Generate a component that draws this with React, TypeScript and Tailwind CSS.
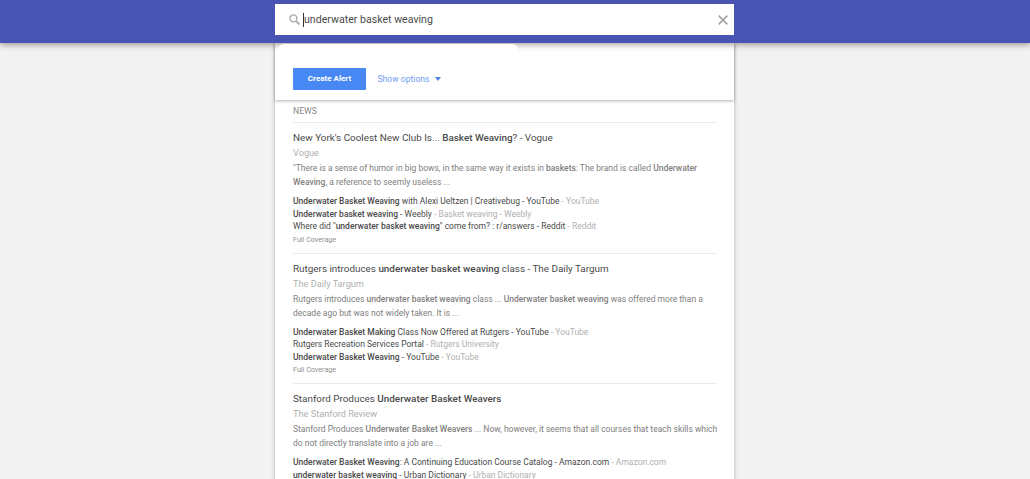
import { ReactNode } from "react";

type Story = {
  title: ReactNode;
  source: string;
  snippet: ReactNode;
  links: { text: ReactNode; site: string }[];
  coverage?: boolean;
};

const stories: Story[] = [
  {
    title: (
      <>
        New York's Coolest New Club Is... <b className="font-medium">Basket Weaving</b>? - Vogue
      </>
    ),
    source: "Vogue",
    snippet: (
      <>
        "There is a sense of humor in big bows, in the same way it exists in <b className="font-medium">baskets</b>: The
        brand is called <b className="font-medium">Underwater Weaving</b>, a reference to seemly useless ...
      </>
    ),
    links: [
      {
        text: (
          <>
            <b className="font-medium">Underwater Basket Weaving</b> with Alexi Ueltzen | Creativebug - YouTube
          </>
        ),
        site: "YouTube",
      },
      {
        text: (
          <>
            <b className="font-medium">Underwater basket weaving</b> - Weebly
          </>
        ),
        site: "Basket weaving - Weebly",
      },
      {
        text: (
          <>
            Where did "<b className="font-medium">underwater basket weaving</b>" come from? : r/answers - Reddit
          </>
        ),
        site: "Reddit",
      },
    ],
    coverage: true,
  },
  {
    title: (
      <>
        Rutgers introduces <b className="font-medium">underwater basket weaving</b> class - The Daily Targum
      </>
    ),
    source: "The Daily Targum",
    snippet: (
      <>
        Rutgers introduces <b className="font-medium">underwater basket weaving</b> class ...{" "}
        <b className="font-medium">Underwater basket weaving</b> was offered more than a decade ago but was not widely
        taken. It is ...
      </>
    ),
    links: [
      {
        text: (
          <>
            <b className="font-medium">Underwater Basket Making</b> Class Now Offered at Rutgers - YouTube
          </>
        ),
        site: "YouTube",
      },
      { text: "Rutgers Recreation Services Portal", site: "Rutgers University" },
      {
        text: (
          <>
            <b className="font-medium">Underwater Basket Weaving</b> - YouTube
          </>
        ),
        site: "YouTube",
      },
    ],
    coverage: true,
  },
  {
    title: (
      <>
        Stanford Produces <b className="font-medium">Underwater Basket Weavers</b>
      </>
    ),
    source: "The Stanford Review",
    snippet: (
      <>
        Stanford Produces <b className="font-medium">Underwater Basket Weavers</b> ... Now, however, it seems that all
        courses that teach skills which do not directly translate into a job are ...
      </>
    ),
    links: [
      {
        text: (
          <>
            <b className="font-medium">Underwater Basket Weaving</b>: A Continuing Education Course Catalog - Amazon.com
          </>
        ),
        site: "Amazon.com",
      },
      {
        text: (
          <>
            <b className="font-medium">underwater basket weaving</b> - Urban Dictionary
          </>
        ),
        site: "Urban Dictionary",
      },
    ],
  },
];

function StoryRow({ story }: { story: Story }) {
  return (
    <div className="h-[130.5px] border-b border-[#ebebeb] pt-[7px]">
      <div className="text-[9.9px] leading-[16px] text-[#4a4a4a]">{story.title}</div>
      <div className="-mt-[1px] text-[9.2px] leading-[16px] text-[#b0b0b0]">{story.source}</div>
      <div className="-mr-[3px] text-[8.5px] leading-[14px] text-[#808080]">{story.snippet}</div>
      <div className="mt-[6px]">
        {story.links.map((l, i) => (
          <div key={i} className="whitespace-nowrap text-[8.5px] leading-[12.7px] text-[#4a4a4a]">
            {l.text} <span className="text-[#b0b0b0]">- {l.site}</span>
          </div>
        ))}
      </div>
      {story.coverage && <div className="mt-[0.5px] text-[7.2px] leading-[12px] text-[#909090]">Full Coverage</div>}
    </div>
  );
}

export default function App() {
  return (
    <div className="relative h-[479px] w-[1030px] overflow-hidden bg-[#f2f2f2] font-['Roboto',sans-serif]">
      <header className="relative z-10 h-[43px] bg-[#4a54b3] pl-[275px] pt-[4px] shadow-[0_2px_6px_rgba(0,0,0,0.35)]">
        <div className="flex h-[31px] w-[459px] items-center bg-white pl-[14px] pr-[6px]">
          <svg width="11" height="11" viewBox="0 0 12 12" fill="none" stroke="#a8a8a8" strokeWidth="1.5">
            <circle cx="4.8" cy="4.8" r="3.8" />
            <path d="M7.7 7.7 11.4 11.4" strokeWidth="2" />
          </svg>
          <div className="ml-[3px] h-[14px] w-px bg-[#333]" />
          <div className="flex-1 pt-[1px] text-[10.6px] text-[#4a4a4a]">underwater basket weaving</div>
          <svg width="10" height="10" viewBox="0 0 10 10" stroke="#a6a6a6" strokeWidth="1.8">
            <path d="M.7.7l8.6 8.6M9.3.7.7 9.3" />
          </svg>
        </div>
      </header>

      {/* blotted-out strip lying over the header shadow */}
      <div className="absolute left-[278px] top-[44px] z-20 h-[14px] w-[240px] rounded-b-[12px] rounded-t-[8px] bg-white" />

      <main className="ml-[275px] w-[459px] bg-white shadow-[0_0_4px_rgba(0,0,0,0.28)]">
        <section className="relative z-[1] h-[57px] bg-white shadow-[0_1px_3px_rgba(0,0,0,0.3)]">
          <div className="flex items-center pl-[18px] pt-[25px]">
            <button className="h-[22px] w-[73px] rounded-[1px] bg-[#4788f4] text-[8px] font-bold text-white">
              Create Alert
            </button>
            <span className="ml-[11.5px] pt-[1px] text-[8.6px] text-[#6f9df0]">Show options</span>
            <span className="ml-[5px] h-0 w-0 border-x-[3.5px] border-t-[4px] border-x-transparent border-t-[#4a85e8]" />
          </div>
        </section>

        <section className="pl-[18px] pr-[17px]">
          <div className="flex h-[23px] items-center border-b border-[#ebebeb] text-[8.6px] text-[#888]">NEWS</div>
          {stories.map((s, i) => (
            <StoryRow key={i} story={s} />
          ))}
        </section>
      </main>
    </div>
  );
}
